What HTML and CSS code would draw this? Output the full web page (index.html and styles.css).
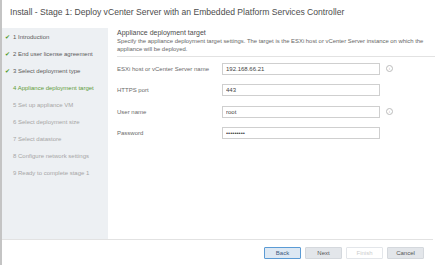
FILE: index.html
```html
<!DOCTYPE html>
<html>
  <head>
    <meta charset="UTF-8">
    <link rel="stylesheet" href="styles.css">
    <title>Install - Stage 1</title>
  </head>
  <body>
    <div id="window">
      <div id="title">Install - Stage 1: Deploy vCenter Server with an Embedded Platform Services Controller</div>
      <div id="main">
        <ul id="steps">
          <li class="done"><span class="check">&#10004;</span>1 Introduction</li>
          <li class="done"><span class="check">&#10004;</span>2 End user license agreement</li>
          <li class="done"><span class="check">&#10004;</span>3 Select deployment type</li>
          <li class="current">4 Appliance deployment target</li>
          <li>5 Set up appliance VM</li>
          <li>6 Select deployment size</li>
          <li>7 Select datastore</li>
          <li>8 Configure network settings</li>
          <li>9 Ready to complete stage 1</li>
        </ul>
        <div id="content">
          <h3 class="page-header">Appliance deployment target</h3>
          <p class="desc">Specify the appliance deployment target settings. The target is the ESXi host or vCenter Server instance on which the appliance will be deployed.</p>
          <form class="fields">
            <div class="row">
              <label for="host">ESXi host or vCenter Server name</label>
              <input type="text" id="host" value="192.168.66.21">
              <span class="info">i</span>
            </div>
            <div class="row">
              <label for="port">HTTPS port</label>
              <input type="text" id="port" value="443">
            </div>
            <div class="row">
              <label for="user">User name</label>
              <input type="text" id="user" value="root">
              <span class="info">i</span>
            </div>
            <div class="row">
              <label for="pass">Password</label>
              <input type="password" id="pass" value="123456789">
            </div>
          </form>
        </div>
      </div>
      <div id="footer">
        <button class="btn primary">Back</button>
        <button class="btn">Next</button>
        <button class="btn disabled">Finish</button>
        <button class="btn">Cancel</button>
      </div>
    </div>
  </body>
</html>
```

FILE: styles.css
```css
body {
  margin: 0;
  padding: 0;
  background-color: #fff;
  font-family: "Liberation Sans", Arial, sans-serif;
  color: #555;
}

#window {
  height: 265px;
  border-left: 2px solid #c4c4c4;
  box-sizing: border-box;
}

#title {
  height: 28px;
  line-height: 24px;
  padding-left: 8px;
  font-size: 8.6px;
  color: #4d4d4d;
}

#main {
  display: flex;
  height: 211px;
}

#steps {
  list-style: none;
  margin: 0;
  padding: 1px 0 0 0;
  width: 106px;
  background-color: #edf0f3;
  font-size: 6px;
  color: #a6a6a6;
}

#steps li {
  height: 17px;
  line-height: 17px;
  padding-left: 11px;
  white-space: nowrap;
}

#steps li.done {
  padding-left: 3px;
  color: #5a5a5a;
}

#steps li.current {
  color: #5d9c3a;
}

.check {
  display: inline-block;
  width: 8px;
  color: #4d9a2a;
  font-size: 6px;
}

#content {
  flex: 1;
  padding: 0 7px 0 9px;
}

.page-header {
  margin: 0;
  padding-top: 0;
  font-size: 7px;
  line-height: 9px;
  font-weight: normal;
  color: #4d4d4d;
}

.desc {
  margin: 0;
  padding: 0 6px 3px 0;
  font-size: 5.9px;
  line-height: 8px;
  color: #666;
  border-bottom: 1px solid #e2e2e2;
}

.fields {
  padding-top: 1px;
}

.row {
  display: flex;
  align-items: center;
  height: 21.5px;
}

.row label {
  width: 105px;
  font-size: 6px;
  color: #6a6a6a;
}

.row input {
  width: 158px;
  height: 12px;
  box-sizing: border-box;
  border: 1px solid #cfcfcf;
  padding: 0 3px;
  margin: 0;
  font-family: "Liberation Sans", Arial, sans-serif;
  font-size: 6px;
  color: #444;
}

.info {
  display: inline-block;
  width: 5px;
  height: 5px;
  margin-left: 6px;
  border: 1px solid #bbb;
  border-radius: 50%;
  font-size: 4px;
  line-height: 5px;
  text-align: center;
  color: #aaa;
}

#footer {
  display: flex;
  justify-content: flex-end;
  gap: 4px;
  margin-right: 9px;
  padding: 7px 9px 0 0;
  border-top: 1px solid #e2e2e2;
}

.btn {
  width: 37px;
  height: 12px;
  padding: 0;
  border: 1px solid #d4d8dd;
  border-radius: 1px;
  background-color: #e3e6ea;
  font-family: "Liberation Sans", Arial, sans-serif;
  font-size: 6px;
  color: #555;
}

.btn.primary {
  background-color: #dde8f3;
  border-color: #5b9bd5;
  color: #3d5a80;
}

.btn.disabled {
  background-color: #fff;
  border-color: #e3e6ea;
  color: #ccc;
}
```
